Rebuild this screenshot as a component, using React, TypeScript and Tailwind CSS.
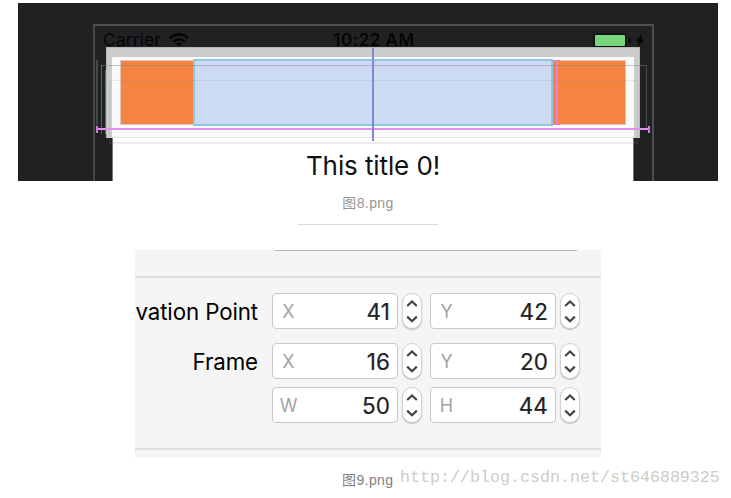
// App.tsx

type Field = { label: string; value: string };

const rows: { title: string; gap: string; fields: Field[] }[] = [
  { title: 'vation Point', gap: 'mb-[14px]', fields: [{ label: 'X', value: '41' }, { label: 'Y', value: '42' }] },
  { title: 'Frame', gap: 'mb-2', fields: [{ label: 'X', value: '16' }, { label: 'Y', value: '20' }] },
  { title: '', gap: '', fields: [{ label: 'W', value: '50' }, { label: 'H', value: '44' }] },
];

function NumberField({ label, value }: Field) {
  return (
    <div className="flex items-center">
      <div className="flex h-9 w-[126px] items-center justify-between rounded-[4px] border border-[#c8c8c8] bg-white pr-[7px]">
        <span className="w-[31px] pt-[2px] text-center text-[18px] leading-none text-[#a3a3a3]">{label}</span>
        <span className="pt-[3px] text-[22.5px] leading-none tracking-[0.1px] text-[#222] [-webkit-text-stroke:0.2px_#222]">{value}</span>
      </div>
      <svg className="ml-1 rounded-full border border-[#d2d2d2] bg-white shadow-[0_1px_1px_rgba(0,0,0,0.25)]" width="20" height="36" viewBox="0 0 18 34" fill="none" stroke="#444" strokeWidth="2.2">
        <path d="M4.2 12 9 7.4l4.8 4.6M4.2 22.6 9 27.2l4.8-4.6" />
      </svg>
    </div>
  );
}

function StatusBar() {
  return (
    <div className="grid h-[18px] grid-cols-3 items-center pr-[73px] pl-[85px] text-[#050506]">
      <div className="flex items-center gap-2">
        <span className="text-[17.5px] leading-5 tracking-[0.1px]">Carrier</span>
        <svg width="20" height="14" viewBox="0 0 20 14" fill="none" stroke="currentColor" strokeWidth="2.4">
          <path d="M1 5.2C6 .2 14 .2 19 5.2M4.4 8.7c3.1-3.1 8.1-3.1 11.2 0" />
          <path d="M7 10.6c1.7-1.6 4.3-1.6 6 0L10 13.6Z" fill="currentColor" stroke="none" />
        </svg>
      </div>
      <div className="text-center text-[17px] leading-5 font-semibold tracking-[0.5px] whitespace-nowrap">10:22 AM</div>
      <div className="flex items-center justify-end">
        <div className="h-[15px] w-[34px] rounded-[3px] border-2 border-[#141516] bg-[#78d57b]" />
        <div className="ml-[2px] h-[5px] w-[2px] rounded-r bg-[#0c0c0d]" />
        <svg className="ml-1" width="10" height="13" viewBox="0 0 10 13" fill="currentColor">
          <path d="M6.8 0 .6 7h3.2L2.6 13l6.6-7.4H5.8Z" />
        </svg>
      </div>
    </div>
  );
}

// Nav bar: orange buttons on both sides of the selected title view
function NavBar() {
  return (
    <div className="mr-[78px] ml-[88px] h-[91px] border border-b-0 border-[#b7b8b8] bg-[#cbcccc] px-[5px] pt-[9px]">
      <div className="h-full border-b border-[#e5e6e6] bg-[#fafafa] px-2 pt-[2px]">
        <div className="flex h-[66px]">
          <div className="mt-px h-[65px] w-[73px] border border-r-0 border-[#ddc7c0] bg-[#f4843f]" />
          <div className="h-[67px] w-[360px] border-2 border-[#8fc6e0] bg-[#cddaf5]" />
          <div className="mt-px flex h-[65px] w-[73px] border border-l-0 border-[#ddc7c0] bg-[#f4843f]">
            <div className="-my-px flex w-[7px] justify-center border-y border-[#e879df]">
              <div className="w-[2px] bg-[#e780dc]" />
            </div>
          </div>
        </div>
      </div>
    </div>
  );
}

// --- DEVICE VIEW WITH LAYOUT GUIDES ---
function DeviceShot() {
  return (
    <div className="relative ml-[18px] h-[178px] w-[700px] overflow-hidden bg-[#202123] pt-[27px] font-['Inter',sans-serif]">
      {/* layers behind the bar */}
      <div className="absolute top-[21px] left-[75px] h-[170px] w-[561px] border-2 border-t-[#4f5052] border-r-[#4c4d4f] border-b-0 border-l-[#454648]" />
      <div className="absolute top-[57px] left-[78px] flex h-[74px] gap-[3px]">
        <div className="h-[65px] w-[2px] bg-[#41484b]" />
        <div className="mt-[5px] w-px bg-[#5f6365]" />
        <div className="mt-[10px] w-px bg-[#66696a]" />
      </div>

      <StatusBar />
      <div className="relative -mt-px">
        <NavBar />
      </div>
      <div className="mr-[84px] ml-[94px] h-[43px] border-x border-[#777] bg-white pt-[12px] text-center text-[26px] leading-8 tracking-[-0.1px] text-[#111]">This title 0!</div>

      {/* outlines and constraint guides over the bar */}
      <div className="absolute top-[62px] left-[82px] h-[64px] w-[547px] border border-b-0 border-[#808486]/45 border-l-transparent" />
      <div className="absolute top-[77px] left-[91px] h-[64px] w-[529px] border border-b-2 border-[#808486]/15" />
      <div className="absolute top-[123px] left-[78px] flex h-[7px] w-[554px] items-center border-x-2 border-[#d17add]">
        <div className="mb-px h-[2px] flex-1 bg-[#e190eb]" />
      </div>
      <div className="absolute top-[45px] left-[354px] h-[93px] w-[2px] bg-[#8188cd]" />
    </div>
  );
}

// --- FRAME INSPECTOR ---
function Inspector() {
  return (
    <div className="ml-[135px] h-[208px] w-[466px] overflow-hidden bg-[#f5f5f5] font-['Inter',sans-serif]">
      <div className="ml-[140px] h-px w-[302px] bg-[#b8b8b8]" />
      <div className="mt-[25px] h-[2px] bg-[#dedede]" />
      <div className="pt-[15px]">
        {rows.map((row, i) => (
          <div key={i} className={`flex items-center ${row.gap}`}>
            <div className="mr-[13px] flex w-[124px] justify-end pt-px pr-px text-[22.3px] leading-8 tracking-[-0.1px] whitespace-nowrap text-black">{row.title}</div>
            <div className="flex gap-2">
              {row.fields.map(field => <NumberField key={field.label} {...field} />)}
            </div>
          </div>
        ))}
      </div>
      <div className="mt-[25px] h-[2px] bg-[#dedede]" />
    </div>
  );
}

export default function App() {
  return (
    <main className="h-[498px] w-[731px] overflow-hidden bg-white pt-[3px] font-['Liberation_Sans','Noto_Sans_CJK_SC',sans-serif] text-[14px]">
      <DeviceShot />
      <div className="mb-[25px] ml-[298px] flex h-11 w-[140px] items-center justify-center border-b border-[#d9d9d9] pt-px tracking-[0.4px] text-[#969696]">图8.png</div>
      <Inspector />
      <footer className="flex h-10 items-center pl-[342px]">
        <span className="w-[58px] pt-[5px] tracking-[0.4px] text-[#808080]">图9.png</span>
        <span className="pt-px font-['Liberation_Mono',monospace] text-[16.67px] leading-none text-[#cdcdc7]">http://blog.csdn.net/st646889325</span>
      </footer>
    </main>
  );
}
